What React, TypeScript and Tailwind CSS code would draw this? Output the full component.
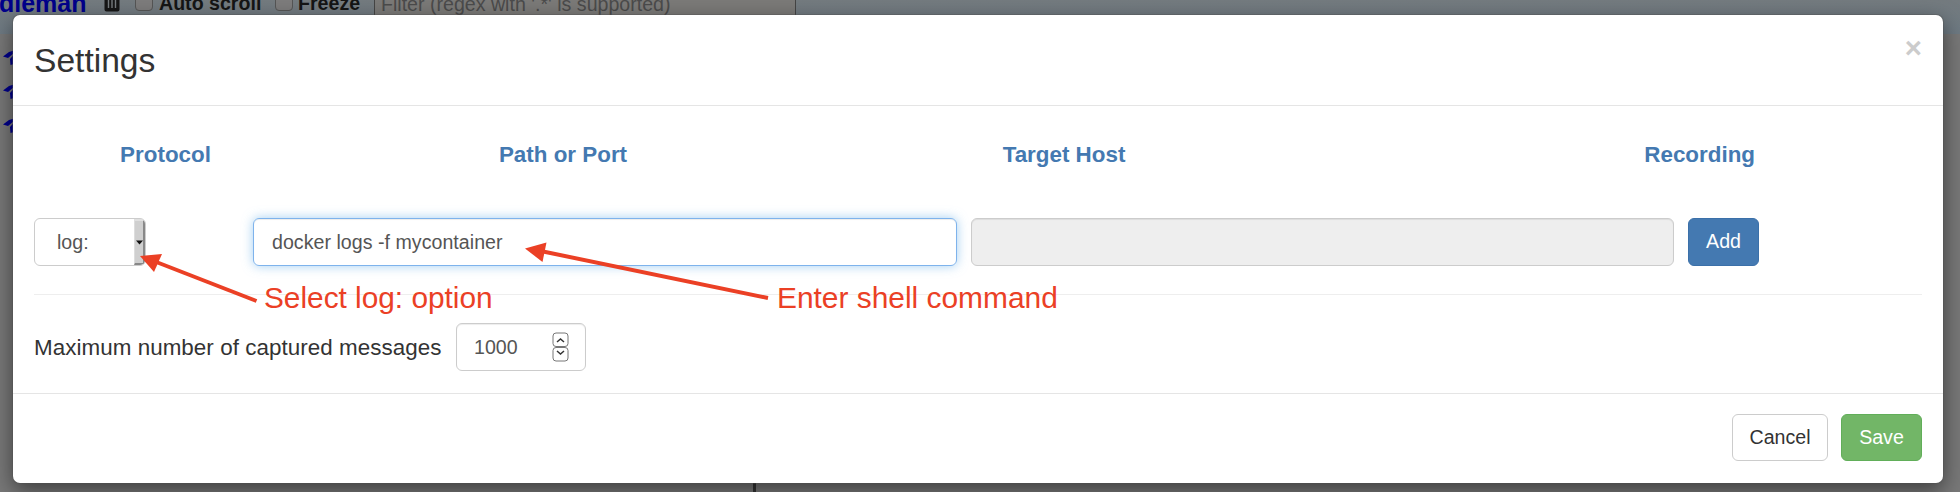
import React from "react";

function PlaneIcon() {
  return (
    <svg className="block h-[34px] w-6" viewBox="0 0 24 34" fill="#00008b">
      <path d="M3 16.500 L9 12 L14 10.500 L14 13 L8 18 Z" />
      <path d="M10 19 L14 14.500 L14 24 L10.500 25 Z" />
    </svg>
  );
}

function Toolbar() {
  return (
    <div className="relative h-[34px] w-full bg-gradient-to-b from-[#747b7f] to-[#6e7a83]">
      <div className="relative -top-[12px] flex h-[30px] items-center whitespace-nowrap">
        <div className="flex w-[103px] shrink-0 justify-start text-[25px] font-bold leading-[30px] text-[#00008b]">
          <span className="-ml-[1px]">dleman</span>
        </div>
        <svg className="-mt-[8px] h-[28px] w-[18px] shrink-0" viewBox="0 0 18 28">
          <path d="M1 6h16v2H1zM1.500 9h15v15.500a2 2 0 0 1-2 2H3.500a2 2 0 0 1-2-2z" fill="#161616" />
          <path d="M5.500 11v12M9 11v12M12.500 11v12" stroke="#777c7f" strokeWidth="1.4" />
        </svg>
        <span className="-mt-[2px] ml-[14px] size-[18px] shrink-0 rounded-[4px] border border-[#555] bg-[#7d7c7c]" />
        <span className="w-[115px] shrink-0 pl-[6px] text-[19.6px] font-bold leading-[30px] text-[#151515]">Auto scroll</span>
        <span className="-mt-[2px] ml-[7px] size-[18px] shrink-0 rounded-[4px] border border-[#555] bg-[#7d7c7c]" />
        <span className="w-[81px] shrink-0 pl-[5px] text-[19.6px] font-bold leading-[30px] text-[#151515]">Freeze</span>
        <div className="h-[30px] w-[422px] shrink-0 border border-[#454545] bg-[#7b7a78] pl-[6px] text-[19.6px] leading-[30px] text-[#4b4b4b]">
          Filter (regex with &apos;.*&apos; is supported)
        </div>
      </div>
    </div>
  );
}

function Arrows() {
  return (
    <svg className="pointer-events-none absolute left-0 top-0" width="1960" height="492" viewBox="0 0 1960 492" fill="#eb4025" stroke="#eb4025">
      <path d="M155 261.5 L256.500 301" strokeWidth="4" />
      <path d="M140 256 L162 254 L154 272 Z" stroke="none" />
      <path d="M543 251.5 L768 298" strokeWidth="4" />
      <path d="M525 248.5 L546.5 242.5 L542.5 262 Z" stroke="none" />
    </svg>
  );
}

export default function App() {
  return (
    <div className="relative h-[492px] w-[1960px] overflow-hidden bg-[#787878] font-['Liberation_Sans',Arial,sans-serif] text-[#333]">
      <Toolbar />
      <div className="flex h-[458px]">
        <div className="box-content w-[753px] border-r-[3px] border-[#333] pt-[6px]">
          <PlaneIcon />
          <PlaneIcon />
          <PlaneIcon />
        </div>
      </div>

      <div role="dialog" className="absolute left-[13px] top-[15px] flex h-[468px] w-[1930px] flex-col rounded-[7px] bg-white shadow-[0_0_0_1px_rgba(80,80,80,0.35),0_7px_21px_rgba(0,0,0,0.5)]">
        <header className="flex h-[91px] shrink-0 justify-between border-b border-[#e5e5e5] px-[21px]">
          <h3 className="mt-[26px] text-[33.6px] leading-[40px]">Settings</h3>
          <button className="mt-[18px] h-[30px] text-[29.4px] font-bold leading-[30px] text-[#ccc]">×</button>
        </header>

        <main className="h-[287px] shrink-0 px-[21px]">
          <div className="flex pt-[34px] text-center text-[22.4px] font-bold leading-[30px] text-[#4479b1]">
            <div className="w-[263px]">Protocol</div>
            <div className="w-[532px]">Path or Port</div>
            <div className="w-[470px]">Target Host</div>
            <div className="flex-1 pr-[167px] text-right">Recording</div>
          </div>

          <div className="mt-[48px] flex h-[48px] text-[19.6px] text-[#555]">
            <div className="mr-[107px] flex w-[112px] justify-between overflow-hidden rounded-[6px] border border-[#ccc] pl-[22px] leading-[46px]">
              <span>log:</span>
              <span className="flex w-[11px] items-center justify-center border-b-2 border-l border-r-2 border-t-2 border-b-[#888] border-l-[#ddd] border-r-[#888] border-t-[#e0e0e0] bg-[#cfcfcf]">
                <svg className="shrink-0" width="7" height="5" viewBox="0 0 7 5">
                  <path d="M0 0.5h7L3.5 4.5z" fill="#111" />
                </svg>
              </span>
            </div>
            <div className="mr-[14px] w-[704px] rounded-[6px] border border-[#7eb3ec] pl-[18px] leading-[46px] tracking-[0.03px] shadow-[inset_0_1px_1px_rgba(0,0,0,0.075),0_0_11px_rgba(102,175,233,0.6)]">
              docker logs -f mycontainer
            </div>
            <div className="mr-[14px] w-[703px] rounded-[6px] border border-[#ccc] bg-[#eee] shadow-[inset_0_1px_1px_rgba(0,0,0,0.075)]" />
            <button className="w-[71px] rounded-[6px] border border-[#3b70a9] bg-[#4479b1] text-white">Add</button>
          </div>

          <div className="mt-[28px] h-px bg-[#eee]" />

          <div className="mt-[28px] flex h-[48px] items-center">
            <span className="w-[422px] whitespace-nowrap pt-[2px] text-[22.4px] tracking-[0.05px]">Maximum number of captured messages</span>
            <div className="flex h-[48px] w-[130px] items-center justify-between rounded-[6px] border border-[#ccc] pl-[17px] pr-[16px] text-[19.6px] text-[#555] shadow-[inset_0_1px_1px_rgba(0,0,0,0.075)]">
              <span className="pt-px">1000</span>
              <svg width="17" height="30" viewBox="0 0 17 30" fill="none">
                <rect x="1" y="1" width="15" height="13.5" rx="3" stroke="#777" />
                <rect x="1" y="15.5" width="15" height="13.5" rx="3" stroke="#777" />
                <path d="M5 10l3.500-3 3.500 3M5 19l3.500 3 3.500-3" stroke="#333" strokeWidth="1.5" />
              </svg>
            </div>
          </div>
        </main>

        <footer className="flex flex-1 justify-end border-t border-[#e5e5e5] pr-[21px] pt-[20px] text-[19.6px]">
          <button className="mr-[13px] h-[47px] w-[96px] rounded-[6px] border border-[#ccc]">Cancel</button>
          <button className="h-[47px] w-[81px] rounded-[6px] border border-[#61ae59] bg-[#72b667] text-white">Save</button>
        </footer>
      </div>

      <Arrows />
      <span className="absolute left-[264px] top-[281px] whitespace-nowrap text-[29.8px] leading-[34px] text-[#eb4025]">Select log: option</span>
      <span className="absolute left-[777px] top-[281px] whitespace-nowrap text-[29.9px] leading-[34px] text-[#eb4025]">Enter shell command</span>
    </div>
  );
}
